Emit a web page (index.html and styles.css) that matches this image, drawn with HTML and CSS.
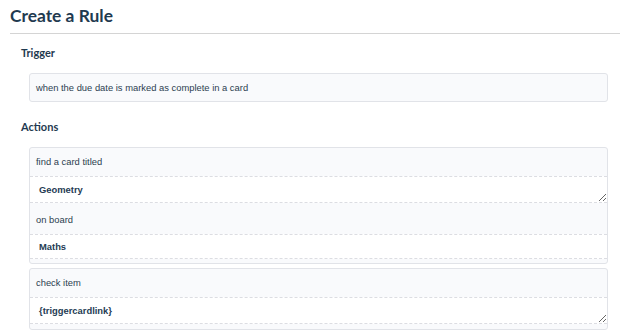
FILE: index.html
```html
<!DOCTYPE html>
<html>
	<head>
		<meta charset="UTF-8">
		<title>Create a Rule</title>
		<link rel="stylesheet" href="styles.css">
	</head>
	<body>
		<div class="page">
			<h1 class="title">Create a Rule</h1>
			<hr class="rule">
			<section class="group">
				<h2 class="group-title">Trigger</h2>
				<div class="trigger">when the due date is marked as complete in a card</div>
			</section>
			<section class="group">
				<h2 class="group-title">Actions</h2>
				<div class="action">
					<div class="action-label">find a card titled</div>
					<textarea class="action-field action-area" rows="1">Geometry</textarea>
					<div class="action-label action-label-next">on board</div>
					<input class="action-field action-input" type="text" value="Maths">
				</div>
				<div class="action action-last">
					<div class="action-label">check item</div>
					<textarea class="action-field action-area" rows="1">{triggercardlink}</textarea>
				</div>
			</section>
		</div>
	</body>
</html>
```

FILE: styles.css
```css
body {
	margin: 0;
	background: #fff;
	color: #243b53;
	font-family: "Liberation Sans", Arial, sans-serif;
}
.page {
	padding: 0 0 0 10px;
}
.title {
	margin: 0;
	padding-top: 5px;
	font-family: Lato, "Open Sans", sans-serif;
	font-weight: 700;
	font-size: 17.4px;
	line-height: 22px;
	color: #1f3a50;
}
.rule {
	margin: 6px 0 0 0;
	border: 0;
	border-top: 1px solid #d4d4d4;
}
.group {
	padding: 0 12px 0 11px;
}
.group-title {
	margin: 0;
	font-family: Lato, "Open Sans", sans-serif;
	font-weight: 700;
	font-size: 11px;
	line-height: 14px;
	color: #1f3a50;
}
.group:first-of-type .group-title {
	padding-top: 12px;
}
.group + .group .group-title {
	padding-top: 18px;
}
.trigger {
	margin: 13px 0 0 8px;
	padding: 0 6px;
	height: 27px;
	line-height: 28px;
	font-size: 9.4px;
	color: #2c3e50;
	background: #f9fafc;
	border: 1px solid #e1e3e8;
	border-radius: 3px;
}
.action {
	margin: 13px 0 0 8px;
	background: #f9fafc;
	border: 1px solid #e1e3e8;
	border-radius: 3px;
	padding-bottom: 4px;
}
.action-last {
	margin-top: 4px;
	padding-bottom: 5px;
}
.action-label {
	padding: 0 6px;
	height: 28px;
	line-height: 28px;
	font-size: 9.4px;
	color: #2c3e50;
}
.action-label-next {
	margin-top: 3px;
	height: 28px;
}
.action-field {
	display: block;
	box-sizing: border-box;
	width: 100%;
	margin: 0;
	padding: 0 9px;
	background: #fff;
	border: 0;
	border-top: 1px dashed #dcdde2;
	border-bottom: 1px dashed #dcdde2;
	font-family: "Liberation Sans", Arial, sans-serif;
	font-weight: 700;
	font-size: 9.4px;
	color: #243b53;
	outline: none;
}
.action-area {
	height: 27px;
	padding-top: 6px;
	line-height: 14px;
	resize: vertical;
	overflow: hidden;
}
.action-input {
	height: 25px;
	line-height: 23px;
}
```
